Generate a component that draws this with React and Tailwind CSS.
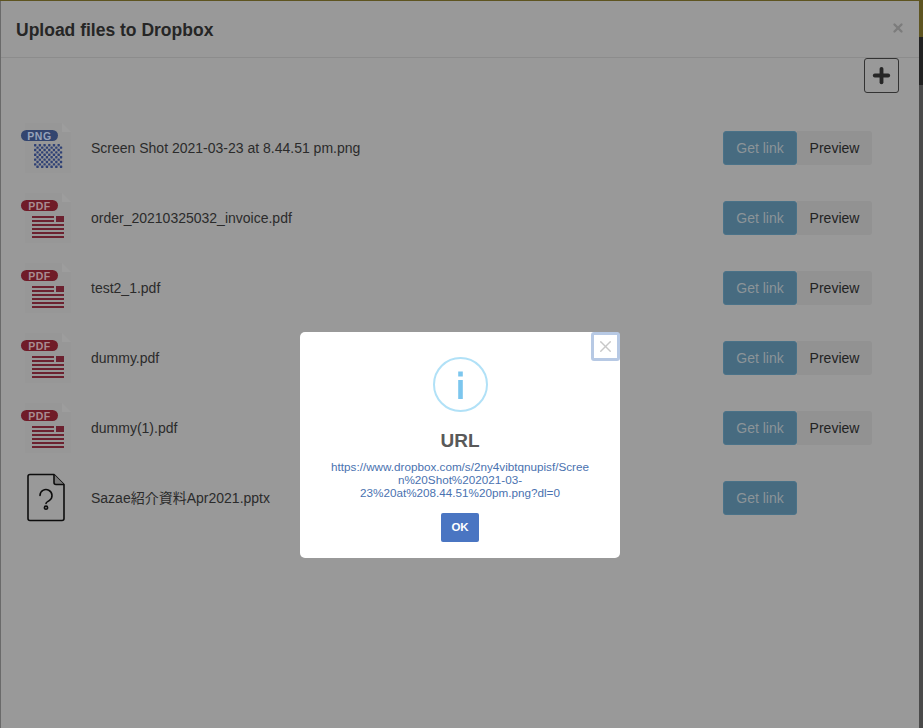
import { X, Plus } from 'lucide-react';

const files = [
  { name: 'Screen Shot 2021-03-23 at 8.44.51 pm.png', type: 'png' },
  { name: 'order_20210325032_invoice.pdf', type: 'pdf' },
  { name: 'test2_1.pdf', type: 'pdf' },
  { name: 'dummy.pdf', type: 'pdf' },
  { name: 'dummy(1).pdf', type: 'pdf' },
  { name: 'Sazae紹介資料Apr2021.pptx', type: 'unknown' },
];

function DocIcon({ label, color, textColor, children }) {
  return (
    <svg width="52" height="52" viewBox="0 0 52 52" className="shrink-0">
      <path d="M5 1H42L51 10V51H5Z" fill="#979797" />
      <path d="M42 1V10H51Z" fill="#9d9d9d" />
      <rect x="1" y="8" width="37" height="11" rx="5.5" fill={color} />
      <text x="19.5" y="17.5" textAnchor="middle" fontSize="10.5" fontWeight="700" letterSpacing="0.5" fill={textColor} fontFamily="Liberation Sans, sans-serif">
        {label}
      </text>
      {children}
    </svg>
  );
}

function PngIcon() {
  const dots = [];
  for (let r = 0; r < 10; r++) {
    for (let c = 0; c < 12; c++) {
      if ((r + c) % 2 === 0) {
        dots.push(<rect key={`${r}-${c}`} x={14 + c * 2.35} y={22 + r * 2.4} width="2.35" height="2.4" rx="0.6" fill="#2f4175" />);
      }
    }
  }
  return <DocIcon label="PNG" color="#33456f" textColor="#98a3ba">{dots}</DocIcon>;
}

function PdfIcon() {
  return (
    <DocIcon label="PDF" color="#701c28" textColor="#a88c92">
      <g fill="#6c2230">
        <rect x="12" y="24" width="22" height="2" />
        <rect x="12" y="28" width="22" height="2" />
        <rect x="12" y="32" width="32" height="2" />
        <rect x="12" y="36" width="32" height="2" />
        <rect x="12" y="40" width="32" height="2" />
        <rect x="12" y="44" width="32" height="2" />
        <rect x="36" y="24" width="8" height="6" />
      </g>
    </DocIcon>
  );
}

function UnknownIcon() {
  return (
    <svg width="52" height="52" viewBox="0 0 52 52" fill="none" stroke="#0d0d0d" strokeWidth="1.6" className="shrink-0">
      <path d="M10 2.5H34L44 12.5V46.5a2 2 0 0 1-2 2H10a2 2 0 0 1-2-2V4.5a2 2 0 0 1 2-2Z" strokeLinejoin="round" />
      <path d="M34 2.5V10.5a2 2 0 0 0 2 2H44" fill="#7a7a7a" strokeLinejoin="round" />
      <path d="M20 23.5a6 6 0 1 1 9.5 4.9c-2 1.4-3.5 1.8-3.5 3.1" strokeLinecap="round" />
      <circle cx="26" cy="35.7" r="1.6" />
    </svg>
  );
}

function FileRow({ file }) {
  return (
    <div className="flex items-center h-[70px]">
      <div className="w-[71px] pl-[19px] flex items-center shrink-0">
        {file.type === 'png' && <PngIcon />}
        {file.type === 'pdf' && <PdfIcon />}
        {file.type === 'unknown' && <UnknownIcon />}
      </div>
      <div className="ml-[19px] text-[14px] text-[#2b2b2b] flex-1">{file.name}</div>
      <div className="flex w-[149px] h-[34px] text-[14px] mr-[47px]">
        <button className="w-[74px] rounded-[3px] bg-[#476b80] border border-[#4a7288] text-[#8c9498]">Get link</button>
        {file.type !== 'unknown' && (
          <button className="w-[75px] rounded-r-[3px] bg-[#929292] text-[#222222]">Preview</button>
        )}
      </div>
    </div>
  );
}

export default function App() {
  return (
    <div className="relative h-[728px] w-[923px] overflow-hidden flex flex-col font-['Liberation_Sans','Noto_Sans_CJK_JP',sans-serif]">
      <div className="h-[1px] bg-[#5e5420]" />
      <div className="flex flex-1">
        <div className="w-[919px] bg-[#999999] border-l border-[#6a6a6a]">
          <div className="h-[57px] border-b border-[#8c8c8c] flex items-center justify-between pl-[15px] pr-[14px]">
            <h1 className="pt-[2px] text-[17.5px] font-bold text-[#262626]">Upload files to Dropbox</h1>
            <X size={14} strokeWidth={4} className="mb-[3px] text-[#7c7c7c]" />
          </div>
          <div className="flex justify-end pr-[20px]">
            <button className="w-[35px] h-[35px] rounded-[3px] border border-[#333333] flex items-center justify-center">
              <Plus size={23} strokeWidth={4} className="text-[#262626]" />
            </button>
          </div>
          <div className="mt-[20px]">
            {files.map((f) => (
              <FileRow key={f.name} file={f} />
            ))}
          </div>
        </div>
        <div className="flex-1 flex flex-col">
          <div className="h-[36px] bg-[#5e5420]" />
          <div className="h-[48px] bg-[#222222]" />
          <div className="flex-1 bg-[#4a4a4a]" />
        </div>
      </div>

      {/* SweetAlert style popup */}
      <div className="absolute left-[300px] top-[332px] w-[320px] h-[226px] rounded-[5px] bg-white flex flex-col items-center pt-[25px]">
        <button className="absolute right-0 top-0 w-[29px] h-[29px] border-[3px] border-[#b7c9e4] rounded-[3px] flex items-center justify-center">
          <X size={19} strokeWidth={1.8} className="text-[#c8c8c8]" />
        </button>
        <svg width="55" height="55" viewBox="0 0 55 55" className="shrink-0">
          <circle cx="27.5" cy="27.5" r="26.5" fill="none" stroke="#b1e1f7" strokeWidth="2" />
          <rect x="25.2" y="14.5" width="4.6" height="5" fill="#7cc6ee" />
          <rect x="25.2" y="23" width="4.6" height="19" fill="#7cc6ee" />
        </svg>
        <h2 className="mt-[17px] text-[19px] font-bold leading-[24px] text-[#595959]">URL</h2>
        <p className="mt-[7px] w-[270px] break-all text-center text-[11.7px] leading-[13px] text-[#4a72b0]">
          https://www.dropbox.com/s/2ny4vibtqnupisf/Scree
          <br />
          n%20Shot%202021-03-
          <br />
          23%20at%208.44.51%20pm.png?dl=0
        </p>
        <button className="mt-[14px] w-[38px] h-[29px] rounded-[2px] bg-[#4a75c2] text-[11.5px] font-bold text-white">OK</button>
      </div>
    </div>
  );
}
